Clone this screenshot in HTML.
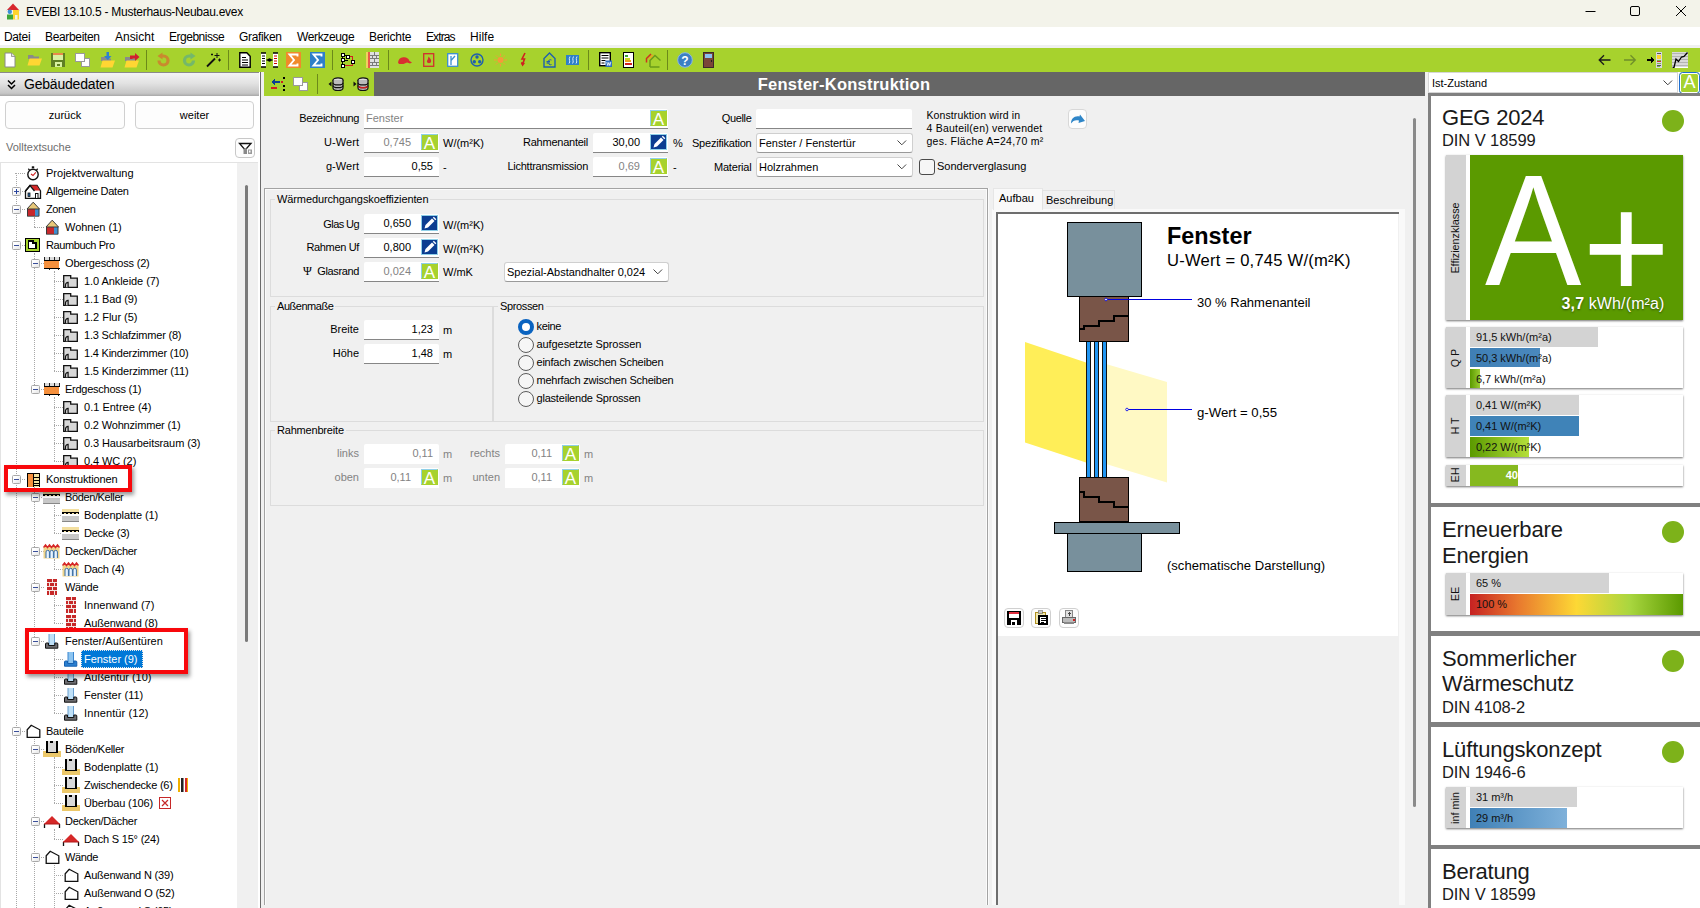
<!DOCTYPE html><html lang="de"><head><meta charset="utf-8"><title>EVEBI 13.10.5 - Musterhaus-Neubau.evex</title><style>
*{box-sizing:border-box;margin:0;padding:0}
html,body{width:1700px;height:908px;overflow:hidden;background:#f0f0f0}
body{font-family:"Liberation Sans",sans-serif;font-size:11px;color:#000;position:relative}
.abs{position:absolute}
.t{position:absolute;white-space:nowrap;line-height:14px}
#titlebar{left:0;top:0;width:1700px;height:27px;background:#f3f3ea}
#menubar{left:0;top:27px;width:1700px;height:21px;background:#fff;border-bottom:3px solid #f0f0f0}
#menubar span{position:absolute;top:3px;font-size:12px;line-height:14px;letter-spacing:.1px}
#toolbar{left:0;top:48px;width:1700px;height:24px;background:#a7d22d}
.tbi{position:absolute;top:4px;width:16px;height:16px}
.tsep{position:absolute;top:2px;width:1px;height:20px;background:#6c8a1a}
#left{left:0;top:72px;width:260px;height:836px;background:#fff}
#lefthead{left:0;top:0;width:259px;height:24px;background:linear-gradient(#f4f4f4 0%,#e2e2e2 45%,#c6c6c6 88%,#a8a8a8 100%);border-top:1px solid #8a8a8a}
.btn{position:absolute;border:1px solid #d0d0d0;border-radius:4px;background:#fdfdfd;text-align:center}
#tree{left:0px;top:90px;width:258px;height:746px;border-top:1px solid #e3e3e3;border-left:1px solid #e3e3e3;background:#fff;overflow:hidden}
.row{position:absolute;height:18px;white-space:nowrap}
.row .ic{position:absolute;top:1px}
.row .tx{position:absolute;top:2px;line-height:14px;font-size:11px}
.exp{position:absolute;width:9px;height:9px;border:1px solid #a8a8a8;background:linear-gradient(135deg,#fff 30%,#e4e4e4);border-radius:1.500px}
.exp:before{content:"";position:absolute;left:1px;top:3px;width:5px;height:1px;background:#3a4f9a}
.exp.plus:after{content:"";position:absolute;left:3px;top:1px;width:1px;height:5px;background:#1f3fa0}
.hl{position:absolute;border-top:1px dotted #a8a8a8}
.vl{position:absolute;border-left:1px dotted #a8a8a8}
.redbox{position:absolute;border:4px solid #f8080c;box-shadow:2px 3px 4px rgba(0,0,0,.4)}
.lbl{position:absolute;white-space:nowrap;text-align:right;line-height:14px}
.inp{position:absolute;background:#fff;height:20px;border-bottom:1px solid #868686;text-align:right;line-height:18px;border-radius:2px 2px 0 0}
.inp.dis{border-bottom:none;color:#838383}
.gray{color:#838383}
.abtn{position:absolute;width:17px;height:16px;background:#a7d22d;color:#fff;font-size:17px;line-height:17px;text-align:center;border:1px solid #8fd0e8;border-right-color:#a7d22d;border-bottom-color:#a7d22d}
.pbtn{position:absolute;width:17px;height:16px;background:#0b3d91;border:1px solid #8fd0e8}
.sel{position:absolute;background:#fff;border:1px solid #cfcfcf;border-bottom-color:#9a9a9a;border-radius:3px;height:20px;line-height:18px;padding-left:2px;white-space:nowrap}
.chev{position:absolute;right:5px;top:6px}
.grp{position:absolute;border:1px solid #dcdcdc;}
.grp>.gt{position:absolute;top:-8px;left:4px;background:#f0f0f0;padding:0 2px;line-height:14px;white-space:nowrap}
.radio{position:absolute;width:16px;height:16px;border-radius:50%;border:1px solid #5c5c5c;background:#f6f6f6}
.radio.on{border:4.5px solid #0a63c0;background:#fff}
.ar{font-family:"Liberation Sans",sans-serif}
.pbox{position:absolute;left:1446px;width:237px;background:#fff;box-shadow:0 1px 2px rgba(0,0,0,.55)}
.pcol{position:absolute;left:0;top:0;bottom:0;width:20px;background:#d3d3d3}
.pcol span{position:absolute;left:46%;top:50%;transform:translate(-50%,-50%) rotate(-90deg);white-space:nowrap;font-size:10.800px;line-height:12px;color:#111}
.bar{position:absolute;left:24px;font-size:11px;line-height:20px;padding-left:5.9px;white-space:nowrap;color:#111}
.dot{position:absolute;left:1662px;width:22px;height:22px;border-radius:50%;background:#7db21a}
.ph{position:absolute;left:1442px;white-space:nowrap;color:#1a1a1a}
.sepbar{position:absolute;left:1428px;width:272px;height:4.5px;background:#808080}
</style></head><body>
<div id="titlebar" class="abs">
<div class="abs" style="left:6px;top:3px"><svg width="16" height="18" viewBox="0 0 16 18"><path d="M0.5 7.500L7 0.500l6.500 7z" fill="#d8262c"/><rect x="1" y="7" width="6" height="5" fill="#f3f3ea"/><circle cx="3.800" cy="8.800" r="2.200" fill="#3b8fd6"/><rect x="1" y="11.500" width="6" height="5" fill="#3da63a"/><path d="M7 7h6v9.500H7z" fill="#ffd42e"/><rect x="9" y="12" width="2.500" height="4.500" fill="#f3f3ea"/></svg></div>
<div class="t" style="left:26px;top:5px;font-size:12px;letter-spacing:-0.258px">EVEBI 13.10.5 - Musterhaus-Neubau.evex</div>
<svg class="abs" style="left:1580px;top:0" width="120" height="27" viewBox="0 0 120 27"><path d="M5.5 11.5h10" stroke="#000" stroke-width="1"/><rect x="50.500" y="6.500" width="9" height="9" rx="1.500" fill="none" stroke="#000" stroke-width="1"/><path d="M96 6l10 10M106 6l-10 10" stroke="#000" stroke-width="1"/></svg>
</div>
<div id="menubar" class="abs">
<span style="left:4px;letter-spacing:-0.363px">Datei</span>
<span style="left:45px;letter-spacing:-0.334px">Bearbeiten</span>
<span style="left:115px;letter-spacing:-0.022px">Ansicht</span>
<span style="left:169px;letter-spacing:-0.484px">Ergebnisse</span>
<span style="left:239px;letter-spacing:-0.331px">Grafiken</span>
<span style="left:297px;letter-spacing:-0.364px">Werkzeuge</span>
<span style="left:369px;letter-spacing:-0.228px">Berichte</span>
<span style="left:426px;letter-spacing:-0.885px">Extras</span>
<span style="left:470px;letter-spacing:0.039px">Hilfe</span>
</div>
<div id="toolbar" class="abs">
<svg class="abs" style="left:4px;top:4px" width="12" height="16" viewBox="0 0 12 16"><path d="M1 1h6.500l3.500 3.500V15H1z" fill="#fff" stroke="#8a8a8a" stroke-width="1"/><path d="M7.500 1v3.500H11" fill="#e0e0e0" stroke="#8a8a8a" stroke-width=".8"/></svg><svg class="abs" style="left:27px;top:4px" width="16" height="16" viewBox="0 0 16 16"><path d="M1 3h5l1 1.500h5V7H1z" fill="#8a8a8a"/><path d="M2.500 6.500H15L12.500 13.500H0.500z" fill="#ffd633"/></svg><svg class="abs" style="left:51px;top:4px" width="14" height="16" viewBox="0 0 14 16" shape-rendering="crispEdges"><rect x="0" y="1" width="14" height="14" fill="#5f7f24"/><rect x="2" y="1" width="10" height="2" fill="#e8884a"/><rect x="2" y="3" width="10" height="5" fill="#d8f0a0"/><rect x="4" y="10" width="7" height="5" fill="#d8f0a0"/><rect x="6" y="11.500" width="2.500" height="2.500" fill="#5f7f24"/></svg><svg class="abs" style="left:75px;top:4px" width="16" height="16" viewBox="0 0 16 16" shape-rendering="crispEdges"><rect x="6.500" y="6.500" width="8" height="8" fill="#fff" stroke="#9a9a9a"/><rect x="0.500" y="1.500" width="9" height="8" fill="#fff" stroke="#9a9a9a"/></svg><svg class="abs" style="left:100px;top:4px" width="16" height="16" viewBox="0 0 16 16"><path d="M1 5h5l1 1.500h4V9H1z" fill="#8a8a8a"/><path d="M2.500 8.500H15L12.500 15.500H0.500z" fill="#ffd633"/><path d="M6.500 0h2.500v4h2.500L7.800 8 4 4h2.500z" fill="#2f7fd0"/></svg><svg class="abs" style="left:124px;top:4px" width="16" height="16" viewBox="0 0 16 16"><path d="M1 5h5l1 1.500h4V9H1z" fill="#8a8a8a"/><path d="M2.500 8.500H15L12.500 15.500H0.500z" fill="#ffd633"/><path d="M6 7V3.500h5V1l4.500 4L11 9V6.500H8.500V7z" fill="#d02030"/></svg><div class="tsep" style="left:146px"></div><svg class="abs" style="left:156px;top:4px" width="16" height="16" viewBox="0 0 16 16"><path d="M3 8.500a4.500 4.500 0 1 0 4.500-4.500H5" fill="none" stroke="#c98a2e" stroke-width="3.200"/><path d="M6.500 0.500L1.500 4l5 3.500z" fill="#c98a2e"/></svg><svg class="abs" style="left:181px;top:4px" width="16" height="16" viewBox="0 0 16 16"><path d="M12.500 8.500a4.500 4.500 0 1 1-4.500-4.500h2.500" fill="none" stroke="#74b86a" stroke-width="3.200"/><path d="M9.500 0.500l5 3.500-5 3.500z" fill="#74b86a"/></svg><svg class="abs" style="left:206px;top:4px" width="16" height="16" viewBox="0 0 16 16"><path d="M1 14.500L9 6.500" stroke="#111" stroke-width="1.800"/><path d="M11 1v5M8.500 3.500h5M13.500 6.500v3M12 8h3M6 1.500v2M5 2.500h2" stroke="#111" stroke-width="1"/></svg><div class="tsep" style="left:228px"></div><svg class="abs" style="left:239px;top:4px" width="12" height="16" viewBox="0 0 12 16"><path d="M0.800 0.800h7l3.400 3.400V15.200H0.800z" fill="#fff" stroke="#000" stroke-width="1.400"/><path d="M3 5.500h4M3 8h6M3 10.500h6M3 13h6" stroke="#000" stroke-width="1"/></svg><svg class="abs" style="left:261px;top:4px" width="17" height="16" viewBox="0 0 17 16"><rect x="0" y="1" width="5" height="14" fill="#fff"/><rect x="12" y="1" width="5" height="14" fill="#fff"/><path d="M0 1h5M0 15h5M12 1h5M12 15h5" stroke="#000" stroke-width="1.500"/><path d="M1 4h3M1 6.500h3M1 9h3M1 11.500h3" stroke="#000" stroke-width="1"/><path d="M13 4h3M13 6.500h3M13 9h3M13 11.500h3" stroke="#c00" stroke-width="1"/><path d="M5.500 8h6" stroke="#000" stroke-width="1.500"/><circle cx="8.500" cy="8" r="1.700" fill="#000"/></svg><svg class="abs" style="left:286px;top:4px" width="15" height="16" viewBox="0 0 15 16"><rect x="0" y="0" width="15" height="16" fill="#f08a2a"/><path d="M11.500 4.500V2.500H3.500l4.500 5.500-4.500 5.500h8V11.500" fill="none" stroke="#fff" stroke-width="1.900"/></svg><svg class="abs" style="left:310px;top:4px" width="15" height="16" viewBox="0 0 15 16"><rect x="0" y="0" width="15" height="16" fill="#2f7fc8"/><path d="M11.500 4.500V2.500H3.500l4.500 5.500-4.500 5.500h8V11.500" fill="none" stroke="#fff" stroke-width="1.900"/></svg><div class="tsep" style="left:332px"></div><svg class="abs" style="left:340px;top:4px" width="17" height="16" viewBox="0 0 17 16" shape-rendering="crispEdges"><path d="M2.500 3v10M2.500 3H8M2.500 8h5v0M2.500 13H6" stroke="#000" stroke-width="1" fill="none"/><path d="M8 4.500h4v5.500M3 13h9.500v-2" stroke="#d02020" stroke-width="1" fill="none"/><rect x="1" y="1" width="3" height="3" fill="#fff" stroke="#000"/><rect x="1" y="6.500" width="3" height="3" fill="#fff" stroke="#000"/><rect x="1" y="12" width="3" height="3" fill="#fff" stroke="#000"/><rect x="6.500" y="3" width="3" height="3" fill="#fff" stroke="#000"/><rect x="11.500" y="8.500" width="3" height="3" fill="#fff" stroke="#000"/></svg><svg class="abs" style="left:366px;top:4px" width="13" height="16" viewBox="0 0 13 16" shape-rendering="crispEdges"><rect x="0" y="0" width="2" height="16" fill="#f0d060"/><rect x="2" y="0" width="2" height="16" fill="#e85a4a"/><rect x="4" y="0" width="9" height="16" fill="#e0e0e0"/><path d="M4 3h9M4 6.500h9M4 10h9M4 13.500h9M8.500 0v3M6.500 3v3.500M10.500 3v3.500M8.500 6.500v3.500M6.500 10v3.500M10.500 10v3.500" stroke="#7a7a7a" stroke-width="1"/></svg><div class="tsep" style="left:388px"></div><svg class="abs" style="left:397px;top:4px" width="16" height="16" viewBox="0 0 16 16"><path d="M1 10.500a6 6 0 0 1 11.500-1.500l2.500 1.500-2 1-3-1-3.500 1.500H2z" fill="#d83030"/></svg><svg class="abs" style="left:423px;top:4px" width="12" height="16" viewBox="0 0 12 16"><rect x="0.700" y="1.700" width="10" height="12.600" fill="none" stroke="#d03030" stroke-width="1.300"/><path d="M5.500 4.500c2 2 3 3.500 2.500 5.500-.5 1.500-3.500 1.500-4 0-.3-1.500 1-2 1.500-5.500z" fill="#d03030"/></svg><svg class="abs" style="left:447px;top:4px" width="12" height="16" viewBox="0 0 12 16"><rect x="0.700" y="1.700" width="10" height="12.600" fill="#fff" stroke="#3b8fd0" stroke-width="1.300"/><path d="M4 13V4M4 8.500l4-4.500" stroke="#3b8fd0" stroke-width="1.300" fill="none"/></svg><svg class="abs" style="left:470px;top:4px" width="14" height="16" viewBox="0 0 14 16"><circle cx="7" cy="8" r="6" fill="none" stroke="#1f5fae" stroke-width="1.400"/><circle cx="7" cy="5" r="1.700" fill="#1f5fae"/><circle cx="4.300" cy="9.800" r="1.700" fill="#1f5fae"/><circle cx="9.700" cy="9.800" r="1.700" fill="#1f5fae"/></svg><svg class="abs" style="left:494px;top:4px" width="13" height="16" viewBox="0 0 13 16"><circle cx="6.500" cy="8" r="3" fill="#f59a3a"/><path d="M6.500 1.500v2.500M6.500 12v2.500M0 8h2.500M10.500 8h2.500M2 3.500l1.700 1.700M9.300 10.800l1.700 1.700M2 12.500l1.700-1.700M9.300 5.200l1.700-1.700" stroke="#f59a3a" stroke-width="1"/></svg><svg class="abs" style="left:520px;top:4px" width="8" height="16" viewBox="0 0 8 16"><path d="M5 1L2 7h2.500L2.500 12.500 1.500 11M4 8.500" fill="none" stroke="#d02020" stroke-width="1.600"/><path d="M1 10l1.500 4.500 2.500-3.500z" fill="#d02020"/></svg><svg class="abs" style="left:543px;top:4px" width="13" height="16" viewBox="0 0 13 16"><path d="M1 15V6.500L6.500 1 12 6.500V15z" fill="none" stroke="#1f5fae" stroke-width="1.400"/><path d="M8.500 8a2.500 2.500 0 1 0 0 4.500M3.500 9.500h3.500M3.500 11h3.500" fill="none" stroke="#1f5fae" stroke-width="1"/></svg><svg class="abs" style="left:566px;top:4px" width="13" height="16" viewBox="0 0 13 16"><rect x="0" y="3" width="13" height="10" fill="#2f7fc8"/><path d="M3 11.500c2-2-1-4 1-7M6.500 11.500c2-2-1-4 1-7M10 11.500c2-2-1-4 1-7" stroke="#d8ecff" stroke-width="1" fill="none"/></svg><div class="tsep" style="left:588px"></div><svg class="abs" style="left:599px;top:4px" width="13" height="16" viewBox="0 0 13 16"><rect x="0.700" y="0.700" width="10.600" height="13" fill="#fff" stroke="#000" stroke-width="1.400"/><path d="M2.500 3.500h7M2.500 6h7M2.500 8.500h4M2.500 11h3" stroke="#000" stroke-width="1.200"/><rect x="6.500" y="8.500" width="6.500" height="6.500" fill="#2f6fc0"/><path d="M7.800 10l1 3.500 1-3 1 3 1-3.500" stroke="#fff" stroke-width=".8" fill="none"/></svg><svg class="abs" style="left:623px;top:4px" width="11" height="16" viewBox="0 0 11 16" shape-rendering="crispEdges"><rect x="0.700" y="0.700" width="9.600" height="14.600" fill="#fff" stroke="#000" stroke-width="1.400"/><rect x="2" y="3" width="3" height="2" fill="#3da63a"/><rect x="2" y="5.500" width="4.500" height="2" fill="#c8d820"/><rect x="2" y="8" width="5.500" height="2" fill="#f0a020"/><rect x="2" y="10.500" width="6.500" height="2.500" fill="#d02020"/></svg><svg class="abs" style="left:645px;top:4px" width="16" height="16" viewBox="0 0 16 16"><path d="M6 2L1.500 6.500v4" fill="none" stroke="#d03020" stroke-width="1.500"/><path d="M4 7l4-4" stroke="#f0a020" stroke-width="1.500"/><path d="M5 15V8.500L10 3.500l5.500 5" fill="none" stroke="#6a9a1a" stroke-width="1.500"/><path d="M5 15h9.500" stroke="#6a9a1a" stroke-width="1.500"/></svg><div class="tsep" style="left:667px"></div><svg class="abs" style="left:677px;top:4px" width="16" height="16" viewBox="0 0 16 16"><circle cx="8" cy="8" r="7.300" fill="#3b7fc4" stroke="#8ab8e8" stroke-width="1"/><text x="8" y="12.500" font-family="Liberation Sans,sans-serif" font-size="12" font-weight="700" fill="#fff" text-anchor="middle">?</text></svg><svg class="abs" style="left:703px;top:4px" width="11" height="16" viewBox="0 0 11 16" shape-rendering="crispEdges"><rect x="0.500" y="0.500" width="10" height="15" fill="#7a4638" stroke="#3a2a2a"/><rect x="2" y="2" width="7" height="4" fill="#8ac0f0"/><rect x="7.500" y="8" width="1.500" height="1.500" fill="#222"/></svg><svg class="abs" style="left:1598px;top:4px" width="14" height="16" viewBox="0 0 14 16"><path d="M12.500 8H1.500M6 3.200L1.200 8 6 12.800" fill="none" stroke="#1a1a1a" stroke-width="1.300"/></svg><svg class="abs" style="left:1623px;top:4px" width="14" height="16" viewBox="0 0 14 16"><path d="M1 8h11M7.500 3.200L12.300 8 7.500 12.800" fill="none" stroke="#6f8f2a" stroke-width="1.300"/></svg><svg class="abs" style="left:1646px;top:4px" width="16" height="16" viewBox="0 0 16 16" shape-rendering="crispEdges"><path d="M1 8h5" stroke="#000" stroke-width="2"/><path d="M5 4.500L9 8 5 11.500z" fill="#000"/><rect x="10" y="0" width="6" height="16" fill="#d8d8e0"/><rect x="11" y="1" width="4" height="1" fill="#555"/><rect x="11" y="3" width="4" height="4" fill="#ffd42e"/><rect x="11" y="7.500" width="4" height="1.500" fill="#7ab648"/><rect x="11" y="9" width="4" height="1.200" fill="#d03030"/><rect x="11" y="10.500" width="4" height="1.500" fill="#7ab648"/><rect x="11" y="12.500" width="4" height="1" fill="#555"/><rect x="11" y="14" width="2.500" height="1" fill="#7ab648"/></svg><svg class="abs" style="left:1672px;top:4px" width="16" height="16" viewBox="0 0 16 16"><rect x="0" y="0" width="16" height="16" fill="#fff"/><path d="M0 1.500h16M0 4.500h16M0 7.500h16M0 10.500h16M0 13.500h16" stroke="#b4b4b4" stroke-width="1.800"/><path d="M0.500 15.500h1.500l2-8.500 2.500 2.500 3-4.500 2.500-.5L15.500 0.500" fill="none" stroke="#000" stroke-width="1.300"/></svg>
</div>
<div id="left" class="abs">
<div id="lefthead" class="abs"><svg class="abs" style="left:6px;top:6px" width="11" height="11" viewBox="0 0 11 11"><path d="M2 1.500l3.500 3.500 3.500-3.500M2 6l3.500 3.500 3.500-3.500" fill="none" stroke="#000" stroke-width="1.500"/></svg><div class="t" style="left:24px;top:3px;font-size:14px;line-height:16px;letter-spacing:-.2px">Gebäudedaten</div></div>
<div class="btn" style="left:5px;top:29px;width:120px;height:28px;line-height:26px">zurück</div>
<div class="btn" style="left:135px;top:29px;width:119px;height:28px;line-height:26px">weiter</div>
<div class="t" style="left:6px;top:68px;color:#6d6d6d">Volltextsuche</div>
<div class="btn" style="left:235px;top:66px;width:20px;height:20px;border-color:#c8c8c8"><svg class="abs" style="left:2px;top:3px" width="15" height="13" viewBox="0 0 15 13"><path d="M1.500 1.500h11.500L7.200 8z" fill="#fff" stroke="#111" stroke-width="1.300"/><rect x="5.500" y="6.500" width="3.500" height="5.500" fill="#8a8a8a"/><rect x="10" y="7.500" width="4" height="4.500" fill="#9a9a9a"/><rect x="11" y="8.500" width="1.500" height="2" fill="#fff"/></svg></div>
<div id="tree" class="abs">
<div class="abs" style="left:236px;top:0;width:21px;height:746px;background:#f0f0f0"></div>
<div class="abs" style="left:244px;top:22px;width:3px;height:457px;background:#7a7a7a;border-radius:1.5px"></div>
<div class="vl" style="left:15px;top:10px;height:767px"></div>
<div class="vl" style="left:33px;top:54px;height:10px"></div>
<div class="vl" style="left:33px;top:90px;height:136px"></div>
<div class="vl" style="left:52.5px;top:108px;height:100px"></div>
<div class="vl" style="left:52.5px;top:234px;height:64px"></div>
<div class="vl" style="left:33px;top:324px;height:154px"></div>
<div class="vl" style="left:52.5px;top:342px;height:28px"></div>
<div class="vl" style="left:52.5px;top:396px;height:10px"></div>
<div class="vl" style="left:52.5px;top:432px;height:28px"></div>
<div class="vl" style="left:52.5px;top:486px;height:64px"></div>
<div class="vl" style="left:33px;top:576px;height:201px"></div>
<div class="vl" style="left:52.5px;top:594px;height:46px"></div>
<div class="vl" style="left:52.5px;top:666px;height:10px"></div>
<div class="vl" style="left:52.5px;top:702px;height:75px"></div>
<div class="hl" style="left:14px;top:10px;width:10px"></div>
<div class="row" style="left:0;top:1px;width:235px">
<span class="ic" style="left:23px"><svg width="18" height="16" viewBox="0 0 18 16"><circle cx="9" cy="9.500" r="5.200" fill="#fff" stroke="#111" stroke-width="1.400"/><rect x="7.800" y="1.300" width="2.400" height="2" fill="#111"/><path d="M4.300 3.800l1.300 1.300M13.700 3.800l-1.300 1.300" stroke="#111" stroke-width="1.300"/><path d="M7 9l2 1.500 2.800-3.200" stroke="#d02020" stroke-width="1.100" fill="none"/></svg></span>
<span class="tx" style="left:45px;letter-spacing:0.01px">Projektverwaltung</span>
</div>
<div class="hl" style="left:14px;top:28px;width:10px"></div>
<div class="exp plus" style="left:10.5px;top:24px"></div>
<div class="row" style="left:0;top:19px;width:235px">
<span class="ic" style="left:23px"><svg width="18" height="16" viewBox="0 0 18 16"><path d="M1.5 8L6 2.5h7L16.5 8v7.5H1.5z" fill="#fff" stroke="#111" stroke-width="1.3"/><path d="M6.5 2.5h6.3L16 7.5h-5.5z" fill="#d62828"/><path d="M1.5 8L6 2.5 10.5 8" fill="none" stroke="#111" stroke-width="1.3"/><rect x="4" y="10" width="2" height="3.5" fill="#2a6fb5" stroke="#111" stroke-width=".8"/><rect x="11.5" y="10.5" width="2.5" height="5" fill="#fff" stroke="#111" stroke-width="1"/></svg></span>
<span class="tx" style="left:45px;letter-spacing:-0.264px">Allgemeine Daten</span>
</div>
<div class="hl" style="left:14px;top:46px;width:10px"></div>
<div class="exp" style="left:10.5px;top:42px"></div>
<div class="row" style="left:0;top:37px;width:235px">
<span class="ic" style="left:23px"><svg width="18" height="16" viewBox="0 0 18 16"><rect x="3.500" y="7.500" width="11.500" height="7.500" fill="#c8282c"/><rect x="11" y="7.500" width="4" height="7.500" fill="#3f8fd0"/><path d="M3 8L9.200 1.200 15.500 8z" fill="#e8c878" stroke="#3a3a3a" stroke-width="1" stroke-linejoin="round"/><path d="M3.500 8v7.300h11.500V8" fill="none" stroke="#3a3a3a" stroke-width="1"/><path d="M4 15.600h11" stroke="#888" stroke-width=".8"/></svg></span>
<span class="tx" style="left:45px;letter-spacing:-0.358px">Zonen</span>
</div>
<div class="hl" style="left:33px;top:64px;width:10px"></div>
<div class="row" style="left:0;top:55px;width:235px">
<span class="ic" style="left:42px"><svg width="18" height="16" viewBox="0 0 18 16"><rect x="3.500" y="7.500" width="11.500" height="7.500" fill="#c8282c"/><rect x="11" y="7.500" width="4" height="7.500" fill="#3f8fd0"/><path d="M3 8L9.200 1.200 15.500 8z" fill="#e8c878" stroke="#3a3a3a" stroke-width="1" stroke-linejoin="round"/><path d="M3.500 8v7.300h11.500V8" fill="none" stroke="#3a3a3a" stroke-width="1"/><path d="M4 15.600h11" stroke="#888" stroke-width=".8"/></svg></span>
<span class="tx" style="left:64px;letter-spacing:-0.057px">Wohnen (1)</span>
</div>
<div class="hl" style="left:14px;top:82px;width:10px"></div>
<div class="exp" style="left:10.5px;top:78px"></div>
<div class="row" style="left:0;top:73px;width:235px">
<span class="ic" style="left:23px"><svg width="18" height="16" viewBox="0 0 18 16" shape-rendering="crispEdges"><rect x="1" y="1" width="14" height="13" fill="#a6d42c" stroke="#000" stroke-width="1"/><rect x="15" y="2" width="1" height="13" fill="#000"/><rect x="2" y="14" width="14" height="1.300" fill="#000"/><path d="M4.500 4h4.500v2h3v5.500H4.500z" fill="#fff" stroke="#000" stroke-width="1.300"/></svg></span>
<span class="tx" style="left:45px;letter-spacing:-0.397px">Raumbuch Pro</span>
</div>
<div class="hl" style="left:33px;top:100px;width:10px"></div>
<div class="exp" style="left:30px;top:96px"></div>
<div class="row" style="left:0;top:91px;width:235px">
<span class="ic" style="left:42px"><svg width="18" height="16" viewBox="0 0 18 16" shape-rendering="crispEdges"><rect x="1" y="2" width="15" height="3" fill="#dcdcdc"/><rect x="1" y="6" width="15" height="7" fill="#f5903d"/><rect x="1" y="5" width="15.500" height="1.300" fill="#000"/><rect x="1" y="12.500" width="15.500" height="1.300" fill="#000"/><rect x="1" y="2" width="1" height="3" fill="#222"/><rect x="6" y="2" width="1" height="3" fill="#222"/><rect x="11" y="2" width="1" height="3" fill="#222"/><rect x="15.500" y="2" width="1" height="3" fill="#222"/><rect x="6" y="13.500" width="1" height="1.500" fill="#222"/><rect x="15" y="13.500" width="1" height="1.500" fill="#222"/></svg></span>
<span class="tx" style="left:64px;letter-spacing:-0.177px">Obergeschoss (2)</span>
</div>
<div class="hl" style="left:52.5px;top:118px;width:9.5px"></div>
<div class="row" style="left:0;top:109px;width:235px">
<span class="ic" style="left:61px"><svg width="17" height="16" viewBox="0 0 17 16"><path d="M1.700 2.700h7v2.500h6.600v9.100H1.700z" fill="#d8d8d8" stroke="#111" stroke-width="1.300"/><path d="M3.500 14.300v-2.300a2.600 2.600 0 0 1 2.600-2.600v4.900" fill="#d8d8d8" stroke="#111" stroke-width="1.200"/></svg></span>
<span class="tx" style="left:83px;letter-spacing:-0.065px">1.0 Ankleide (7)</span>
</div>
<div class="hl" style="left:52.5px;top:136px;width:9.5px"></div>
<div class="row" style="left:0;top:127px;width:235px">
<span class="ic" style="left:61px"><svg width="17" height="16" viewBox="0 0 17 16"><path d="M1.700 2.700h7v2.500h6.600v9.100H1.700z" fill="#d8d8d8" stroke="#111" stroke-width="1.300"/><path d="M3.500 14.300v-2.300a2.600 2.600 0 0 1 2.600-2.600v4.900" fill="#d8d8d8" stroke="#111" stroke-width="1.200"/></svg></span>
<span class="tx" style="left:83px;letter-spacing:-0.093px">1.1 Bad (9)</span>
</div>
<div class="hl" style="left:52.5px;top:154px;width:9.5px"></div>
<div class="row" style="left:0;top:145px;width:235px">
<span class="ic" style="left:61px"><svg width="17" height="16" viewBox="0 0 17 16"><path d="M1.700 2.700h7v2.500h6.600v9.100H1.700z" fill="#d8d8d8" stroke="#111" stroke-width="1.300"/><path d="M3.500 14.300v-2.300a2.600 2.600 0 0 1 2.600-2.600v4.900" fill="#d8d8d8" stroke="#111" stroke-width="1.200"/></svg></span>
<span class="tx" style="left:83px;letter-spacing:-0.033px">1.2 Flur (5)</span>
</div>
<div class="hl" style="left:52.5px;top:172px;width:9.5px"></div>
<div class="row" style="left:0;top:163px;width:235px">
<span class="ic" style="left:61px"><svg width="17" height="16" viewBox="0 0 17 16"><path d="M1.700 2.700h7v2.500h6.600v9.100H1.700z" fill="#d8d8d8" stroke="#111" stroke-width="1.300"/><path d="M3.500 14.300v-2.300a2.600 2.600 0 0 1 2.600-2.600v4.900" fill="#d8d8d8" stroke="#111" stroke-width="1.200"/></svg></span>
<span class="tx" style="left:83px;letter-spacing:-0.209px">1.3 Schlafzimmer (8)</span>
</div>
<div class="hl" style="left:52.5px;top:190px;width:9.5px"></div>
<div class="row" style="left:0;top:181px;width:235px">
<span class="ic" style="left:61px"><svg width="17" height="16" viewBox="0 0 17 16"><path d="M1.700 2.700h7v2.500h6.600v9.100H1.700z" fill="#d8d8d8" stroke="#111" stroke-width="1.300"/><path d="M3.500 14.300v-2.300a2.600 2.600 0 0 1 2.600-2.600v4.900" fill="#d8d8d8" stroke="#111" stroke-width="1.200"/></svg></span>
<span class="tx" style="left:83px;letter-spacing:-0.21px">1.4 Kinderzimmer (10)</span>
</div>
<div class="hl" style="left:52.5px;top:208px;width:9.5px"></div>
<div class="row" style="left:0;top:199px;width:235px">
<span class="ic" style="left:61px"><svg width="17" height="16" viewBox="0 0 17 16"><path d="M1.700 2.700h7v2.500h6.600v9.100H1.700z" fill="#d8d8d8" stroke="#111" stroke-width="1.300"/><path d="M3.500 14.300v-2.300a2.600 2.600 0 0 1 2.600-2.600v4.900" fill="#d8d8d8" stroke="#111" stroke-width="1.200"/></svg></span>
<span class="tx" style="left:83px;letter-spacing:-0.171px">1.5 Kinderzimmer (11)</span>
</div>
<div class="hl" style="left:33px;top:226px;width:10px"></div>
<div class="exp" style="left:30px;top:222px"></div>
<div class="row" style="left:0;top:217px;width:235px">
<span class="ic" style="left:42px"><svg width="18" height="16" viewBox="0 0 18 16" shape-rendering="crispEdges"><rect x="1" y="2" width="15" height="3" fill="#dcdcdc"/><rect x="1" y="6" width="15" height="7" fill="#f5903d"/><rect x="1" y="5" width="15.500" height="1.300" fill="#000"/><rect x="1" y="12.500" width="15.500" height="1.300" fill="#000"/><rect x="1" y="2" width="1" height="3" fill="#222"/><rect x="6" y="2" width="1" height="3" fill="#222"/><rect x="11" y="2" width="1" height="3" fill="#222"/><rect x="15.500" y="2" width="1" height="3" fill="#222"/><rect x="6" y="13.500" width="1" height="1.500" fill="#222"/><rect x="15" y="13.500" width="1" height="1.500" fill="#222"/></svg></span>
<span class="tx" style="left:64px;letter-spacing:-0.259px">Erdgeschoss (1)</span>
</div>
<div class="hl" style="left:52.5px;top:244px;width:9.5px"></div>
<div class="row" style="left:0;top:235px;width:235px">
<span class="ic" style="left:61px"><svg width="17" height="16" viewBox="0 0 17 16"><path d="M1.700 2.700h7v2.500h6.600v9.100H1.700z" fill="#d8d8d8" stroke="#111" stroke-width="1.300"/><path d="M3.500 14.300v-2.300a2.600 2.600 0 0 1 2.600-2.600v4.900" fill="#d8d8d8" stroke="#111" stroke-width="1.200"/></svg></span>
<span class="tx" style="left:83px;letter-spacing:0.01px">0.1 Entree (4)</span>
</div>
<div class="hl" style="left:52.5px;top:262px;width:9.5px"></div>
<div class="row" style="left:0;top:253px;width:235px">
<span class="ic" style="left:61px"><svg width="17" height="16" viewBox="0 0 17 16"><path d="M1.700 2.700h7v2.500h6.600v9.100H1.700z" fill="#d8d8d8" stroke="#111" stroke-width="1.300"/><path d="M3.500 14.300v-2.300a2.600 2.600 0 0 1 2.600-2.600v4.900" fill="#d8d8d8" stroke="#111" stroke-width="1.200"/></svg></span>
<span class="tx" style="left:83px;letter-spacing:-0.169px">0.2 Wohnzimmer (1)</span>
</div>
<div class="hl" style="left:52.5px;top:280px;width:9.5px"></div>
<div class="row" style="left:0;top:271px;width:235px">
<span class="ic" style="left:61px"><svg width="17" height="16" viewBox="0 0 17 16"><path d="M1.700 2.700h7v2.500h6.600v9.100H1.700z" fill="#d8d8d8" stroke="#111" stroke-width="1.300"/><path d="M3.500 14.300v-2.300a2.600 2.600 0 0 1 2.600-2.600v4.900" fill="#d8d8d8" stroke="#111" stroke-width="1.200"/></svg></span>
<span class="tx" style="left:83px;letter-spacing:-0.1px">0.3 Hausarbeitsraum (3)</span>
</div>
<div class="hl" style="left:52.5px;top:298px;width:9.5px"></div>
<div class="row" style="left:0;top:289px;width:235px">
<span class="ic" style="left:61px"><svg width="17" height="16" viewBox="0 0 17 16"><path d="M1.700 2.700h7v2.500h6.600v9.100H1.700z" fill="#d8d8d8" stroke="#111" stroke-width="1.300"/><path d="M3.500 14.300v-2.300a2.600 2.600 0 0 1 2.600-2.600v4.900" fill="#d8d8d8" stroke="#111" stroke-width="1.200"/></svg></span>
<span class="tx" style="left:83px;letter-spacing:-0.097px">0.4 WC (2)</span>
</div>
<div class="hl" style="left:14px;top:316px;width:10px"></div>
<div class="exp" style="left:10.5px;top:312px"></div>
<div class="row" style="left:0;top:307px;width:235px">
<span class="ic" style="left:23px"><svg width="18" height="16" viewBox="0 0 18 16" shape-rendering="crispEdges"><rect x="4" y="3" width="5" height="13" fill="#f5903d"/><rect x="10" y="3" width="5" height="13" fill="#f3e3a0"/><rect x="3" y="2" width="1" height="14" fill="#000"/><rect x="8.5" y="2" width="1.5" height="14" fill="#000"/><rect x="15" y="2" width="1" height="14" fill="#000"/><rect x="3" y="2" width="13" height="1" fill="#000"/><rect x="10" y="5.5" width="5" height="1" fill="#000"/><rect x="10" y="8.500" width="5" height="1" fill="#000"/><rect x="10" y="11.500" width="5" height="1" fill="#000"/><rect x="10" y="14" width="5" height="1" fill="#000"/></svg></span>
<span class="tx" style="left:45px;letter-spacing:-0.141px">Konstruktionen</span>
</div>
<div class="hl" style="left:33px;top:334px;width:10px"></div>
<div class="exp" style="left:30px;top:330px"></div>
<div class="row" style="left:0;top:325px;width:235px">
<span class="ic" style="left:42px"><svg width="17" height="16" viewBox="0 0 17 16" shape-rendering="crispEdges"><rect x="0" y="2" width="17" height="3" fill="#f3dfa0"/><rect x="0" y="5" width="17" height="2" fill="#000"/><path d="M2 6h2M6 6h2M10 6h2M14 6h2" stroke="#f3dfa0" stroke-width="1"/><rect x="0" y="7" width="17" height="2" fill="#fff"/><rect x="0" y="9" width="17" height="5" fill="#c8c8c8"/><rect x="0" y="13.5" width="17" height="1" fill="#888"/></svg></span>
<span class="tx" style="left:64px;letter-spacing:-0.382px">Böden/Keller</span>
</div>
<div class="hl" style="left:52.5px;top:352px;width:9.5px"></div>
<div class="row" style="left:0;top:343px;width:235px">
<span class="ic" style="left:61px"><svg width="17" height="16" viewBox="0 0 17 16" shape-rendering="crispEdges"><rect x="0" y="2" width="17" height="3" fill="#f3dfa0"/><rect x="0" y="5" width="17" height="2" fill="#000"/><path d="M2 6h2M6 6h2M10 6h2M14 6h2" stroke="#f3dfa0" stroke-width="1"/><rect x="0" y="7" width="17" height="2" fill="#fff"/><rect x="0" y="9" width="17" height="5" fill="#c8c8c8"/><rect x="0" y="13.5" width="17" height="1" fill="#888"/></svg></span>
<span class="tx" style="left:83px;letter-spacing:-0.068px">Bodenplatte (1)</span>
</div>
<div class="hl" style="left:52.5px;top:370px;width:9.5px"></div>
<div class="row" style="left:0;top:361px;width:235px">
<span class="ic" style="left:61px"><svg width="17" height="16" viewBox="0 0 17 16" shape-rendering="crispEdges"><rect x="0" y="2" width="17" height="3" fill="#f3dfa0"/><rect x="0" y="5" width="17" height="2" fill="#000"/><path d="M2 6h2M6 6h2M10 6h2M14 6h2" stroke="#f3dfa0" stroke-width="1"/><rect x="0" y="7" width="17" height="2" fill="#fff"/><rect x="0" y="9" width="17" height="5" fill="#c8c8c8"/><rect x="0" y="13.5" width="17" height="1" fill="#888"/></svg></span>
<span class="tx" style="left:83px;letter-spacing:-0.253px">Decke (3)</span>
</div>
<div class="hl" style="left:33px;top:388px;width:10px"></div>
<div class="exp" style="left:30px;top:384px"></div>
<div class="row" style="left:0;top:379px;width:235px">
<span class="ic" style="left:42px"><svg width="17" height="16" viewBox="0 0 17 16"><rect x="0.5" y="4" width="16" height="11.5" fill="#f0d48a"/><path d="M0.5 4.5l2-2.5 2 2.5 2-2.5 2 2.5 2-2.5 2 2.5 2-2.5 2 2.5" fill="none" stroke="#d62828" stroke-width="1.5"/><path d="M3 15V9a1.7 1.7 0 0 1 3.4 0v6M7 15V9a1.7 1.7 0 0 1 3.4 0v6M11 15V9a1.7 1.7 0 0 1 3.4 0v6" fill="#e8f4ff" stroke="#3b6ea5" stroke-width="1"/></svg></span>
<span class="tx" style="left:64px;letter-spacing:-0.301px">Decken/Dächer</span>
</div>
<div class="hl" style="left:52.5px;top:406px;width:9.5px"></div>
<div class="row" style="left:0;top:397px;width:235px">
<span class="ic" style="left:61px"><svg width="17" height="16" viewBox="0 0 17 16"><rect x="0.5" y="4" width="16" height="11.5" fill="#f0d48a"/><path d="M0.5 4.5l2-2.5 2 2.5 2-2.5 2 2.5 2-2.5 2 2.5 2-2.5 2 2.5" fill="none" stroke="#d62828" stroke-width="1.5"/><path d="M3 15V9a1.7 1.7 0 0 1 3.4 0v6M7 15V9a1.7 1.7 0 0 1 3.4 0v6M11 15V9a1.7 1.7 0 0 1 3.4 0v6" fill="#e8f4ff" stroke="#3b6ea5" stroke-width="1"/></svg></span>
<span class="tx" style="left:83px;letter-spacing:-0.235px">Dach (4)</span>
</div>
<div class="hl" style="left:33px;top:424px;width:10px"></div>
<div class="exp" style="left:30px;top:420px"></div>
<div class="row" style="left:0;top:415px;width:235px">
<span class="ic" style="left:42px"><svg width="16" height="16" viewBox="0 0 16 16" shape-rendering="crispEdges"><rect x="4" y="0" width="10" height="16" fill="#c62828"/><path d="M4 3.500h10M4 7.500h10M4 11.500h10" stroke="#f3e4e0" stroke-width="1"/><path d="M9 0v3.500M6.500 3.500v4M11.500 3.500v4M9 7.500v4M6.500 11.500v4.500M11.500 11.500v4.500" stroke="#f3e4e0" stroke-width="1"/></svg></span>
<span class="tx" style="left:64px;letter-spacing:-0.331px">Wände</span>
</div>
<div class="hl" style="left:52.5px;top:442px;width:9.5px"></div>
<div class="row" style="left:0;top:433px;width:235px">
<span class="ic" style="left:61px"><svg width="16" height="16" viewBox="0 0 16 16" shape-rendering="crispEdges"><rect x="4" y="0" width="10" height="16" fill="#c62828"/><path d="M4 3.500h10M4 7.500h10M4 11.500h10" stroke="#f3e4e0" stroke-width="1"/><path d="M9 0v3.500M6.500 3.500v4M11.500 3.500v4M9 7.500v4M6.500 11.500v4.500M11.500 11.500v4.500" stroke="#f3e4e0" stroke-width="1"/></svg></span>
<span class="tx" style="left:83px;letter-spacing:0.006px">Innenwand (7)</span>
</div>
<div class="hl" style="left:52.5px;top:460px;width:9.5px"></div>
<div class="row" style="left:0;top:451px;width:235px">
<span class="ic" style="left:61px"><svg width="16" height="16" viewBox="0 0 16 16" shape-rendering="crispEdges"><rect x="4" y="0" width="10" height="16" fill="#c62828"/><path d="M4 3.500h10M4 7.500h10M4 11.500h10" stroke="#f3e4e0" stroke-width="1"/><path d="M9 0v3.500M6.500 3.500v4M11.500 3.500v4M9 7.500v4M6.500 11.500v4.500M11.500 11.500v4.500" stroke="#f3e4e0" stroke-width="1"/></svg></span>
<span class="tx" style="left:83px;letter-spacing:-0.116px">Außenwand (8)</span>
</div>
<div class="hl" style="left:33px;top:478px;width:10px"></div>
<div class="exp" style="left:30px;top:474px"></div>
<div class="row" style="left:0;top:469px;width:235px">
<span class="ic" style="left:42px"><svg width="18" height="16" viewBox="0 0 18 16"><rect x="6" y="1" width="5.500" height="12" fill="#bfe0f7"/><rect x="5.500" y="1" width="1" height="11" fill="#6a9fd0"/><rect x="11" y="1" width="1" height="11" fill="#6a9fd0"/><path d="M2.500 15.200v-4.200a1 1 0 0 1 1-1h2v2.500h6.300v-2.500h2a1 1 0 0 1 1 1v4.200z" fill="#6e6e72" stroke="#111" stroke-width="1"/></svg></span>
<span class="tx" style="left:64px;letter-spacing:-0.002px">Fenster/Außentüren</span>
</div>
<div class="hl" style="left:52.5px;top:496px;width:9.5px"></div>
<div class="row" style="left:0;top:487px;width:235px">
<span class="ic" style="left:61px"><svg width="18" height="16" viewBox="0 0 18 16"><rect x="6" y="1" width="5.500" height="12" fill="#8cc4f0"/><rect x="5.500" y="1" width="1" height="11" fill="#3a86d0"/><rect x="11" y="1" width="1" height="11" fill="#3a86d0"/><path d="M2.500 15.200v-4.200a1 1 0 0 1 1-1h2v2.500h6.300v-2.500h2a1 1 0 0 1 1 1v4.200z" fill="#2a7fd0" stroke="#1560b0" stroke-width="1"/></svg></span>
<span class="abs" style="left:80px;top:0;width:62px;height:18px;background:#0078d7;border:1px dotted #e8e8e8"></span>
<span class="tx" style="left:83px;color:#fff;letter-spacing:-0.036px">Fenster (9)</span>
</div>
<div class="hl" style="left:52.5px;top:514px;width:9.5px"></div>
<div class="row" style="left:0;top:505px;width:235px">
<span class="ic" style="left:61px"><svg width="18" height="16" viewBox="0 0 18 16"><rect x="6" y="1" width="5.500" height="12" fill="#bfe0f7"/><rect x="5.500" y="1" width="1" height="11" fill="#6a9fd0"/><rect x="11" y="1" width="1" height="11" fill="#6a9fd0"/><path d="M2.500 15.200v-4.200a1 1 0 0 1 1-1h2v2.500h6.300v-2.500h2a1 1 0 0 1 1 1v4.200z" fill="#6e6e72" stroke="#111" stroke-width="1"/></svg></span>
<span class="tx" style="left:83px;letter-spacing:-0.036px">Außentür (10)</span>
</div>
<div class="hl" style="left:52.5px;top:532px;width:9.5px"></div>
<div class="row" style="left:0;top:523px;width:235px">
<span class="ic" style="left:61px"><svg width="18" height="16" viewBox="0 0 18 16"><rect x="6" y="1" width="5.500" height="12" fill="#bfe0f7"/><rect x="5.500" y="1" width="1" height="11" fill="#6a9fd0"/><rect x="11" y="1" width="1" height="11" fill="#6a9fd0"/><path d="M2.500 15.200v-4.200a1 1 0 0 1 1-1h2v2.500h6.300v-2.500h2a1 1 0 0 1 1 1v4.200z" fill="#6e6e72" stroke="#111" stroke-width="1"/></svg></span>
<span class="tx" style="left:83px;letter-spacing:0.017px">Fenster (11)</span>
</div>
<div class="hl" style="left:52.5px;top:550px;width:9.5px"></div>
<div class="row" style="left:0;top:541px;width:235px">
<span class="ic" style="left:61px"><svg width="18" height="16" viewBox="0 0 18 16"><rect x="6" y="1" width="5.500" height="12" fill="#bfe0f7"/><rect x="5.500" y="1" width="1" height="11" fill="#6a9fd0"/><rect x="11" y="1" width="1" height="11" fill="#6a9fd0"/><path d="M2.500 15.200v-4.200a1 1 0 0 1 1-1h2v2.500h6.300v-2.500h2a1 1 0 0 1 1 1v4.200z" fill="#6e6e72" stroke="#111" stroke-width="1"/></svg></span>
<span class="tx" style="left:83px;letter-spacing:0.124px">Innentür (12)</span>
</div>
<div class="hl" style="left:14px;top:568px;width:10px"></div>
<div class="exp" style="left:10.5px;top:564px"></div>
<div class="row" style="left:0;top:559px;width:235px">
<span class="ic" style="left:23px"><svg width="18" height="16" viewBox="0 0 18 16"><path d="M3.200 14.300V6.800L7.200 2.200l8.600 4.600v7.500z" fill="#fff" stroke="#111" stroke-width="1.300" stroke-linejoin="miter"/></svg></span>
<span class="tx" style="left:45px;letter-spacing:-0.281px">Bauteile</span>
</div>
<div class="hl" style="left:33px;top:586px;width:10px"></div>
<div class="exp" style="left:30px;top:582px"></div>
<div class="row" style="left:0;top:577px;width:235px">
<span class="ic" style="left:42px"><svg width="18" height="16" viewBox="0 0 18 16" shape-rendering="crispEdges"><rect x="0" y="10" width="18" height="6" fill="#ecc86a"/><rect x="4" y="0" width="10" height="11" fill="#d8d8d8"/><path d="M4 0v11.5h10V0" fill="none" stroke="#000" stroke-width="1.5"/><rect x="7" y="0" width="3" height="1.5" fill="#000"/></svg></span>
<span class="tx" style="left:64px;letter-spacing:-0.332px">Böden/Keller</span>
</div>
<div class="hl" style="left:52.5px;top:604px;width:9.5px"></div>
<div class="row" style="left:0;top:595px;width:235px">
<span class="ic" style="left:61px"><svg width="18" height="16" viewBox="0 0 18 16" shape-rendering="crispEdges"><rect x="0" y="10" width="18" height="6" fill="#ecc86a"/><rect x="4" y="0" width="10" height="11" fill="#d8d8d8"/><path d="M4 0v11.5h10V0" fill="none" stroke="#000" stroke-width="1.5"/><rect x="7" y="0" width="3" height="1.5" fill="#000"/></svg></span>
<span class="tx" style="left:83px;letter-spacing:-0.054px">Bodenplatte (1)</span>
</div>
<div class="hl" style="left:52.5px;top:622px;width:9.5px"></div>
<div class="row" style="left:0;top:613px;width:235px">
<span class="ic" style="left:61px"><svg width="18" height="16" viewBox="0 0 18 16" shape-rendering="crispEdges"><rect x="0" y="10" width="18" height="6" fill="#ecc86a"/><rect x="4" y="0" width="10" height="11" fill="#d8d8d8"/><path d="M4 0v11.5h10V0" fill="none" stroke="#000" stroke-width="1.5"/><rect x="7" y="0" width="3" height="1.5" fill="#000"/></svg></span>
<span class="tx" style="left:83px;letter-spacing:-0.213px">Zwischendecke (6)</span>
<svg class="abs" style="left:177px;top:2px" width="11" height="14" viewBox="0 0 11 14" shape-rendering="crispEdges"><rect x="0" y="0" width="2" height="14" fill="#f0b000"/><rect x="3" y="0" width="2" height="14" fill="#222"/><rect x="5" y="0" width="1" height="14" fill="#888"/><rect x="7" y="0" width="2" height="14" fill="#d62828"/><rect x="9" y="0" width="1" height="14" fill="#f0b000"/></svg>
</div>
<div class="hl" style="left:52.5px;top:640px;width:9.5px"></div>
<div class="row" style="left:0;top:631px;width:235px">
<span class="ic" style="left:61px"><svg width="18" height="16" viewBox="0 0 18 16" shape-rendering="crispEdges"><rect x="0" y="10" width="18" height="6" fill="#ecc86a"/><rect x="4" y="0" width="10" height="11" fill="#d8d8d8"/><path d="M4 0v11.5h10V0" fill="none" stroke="#000" stroke-width="1.5"/><rect x="7" y="0" width="3" height="1.5" fill="#000"/></svg></span>
<span class="tx" style="left:83px;letter-spacing:-0.141px">Überbau (106)</span>
<svg class="abs" style="left:158px;top:3px" width="12" height="12" viewBox="0 0 12 12"><rect x=".5" y=".5" width="11" height="11" fill="#fff" stroke="#c62828"/><path d="M3 3l6 6M9 3l-6 6" stroke="#c62828" stroke-width="1.2"/></svg>
</div>
<div class="hl" style="left:33px;top:658px;width:10px"></div>
<div class="exp" style="left:30px;top:654px"></div>
<div class="row" style="left:0;top:649px;width:235px">
<span class="ic" style="left:42px"><svg width="18" height="16" viewBox="0 0 18 16"><path d="M1 11L9 3l8 8z" fill="#d62828"/><path d="M1.5 11v4M16.5 11v4" stroke="#111" stroke-width="1.3"/><path d="M1 11h16" stroke="#b01818" stroke-width="1"/></svg></span>
<span class="tx" style="left:64px;letter-spacing:-0.293px">Decken/Dächer</span>
</div>
<div class="hl" style="left:52.5px;top:676px;width:9.5px"></div>
<div class="row" style="left:0;top:667px;width:235px">
<span class="ic" style="left:61px"><svg width="18" height="16" viewBox="0 0 18 16"><path d="M1 11L9 3l8 8z" fill="#d62828"/><path d="M1.5 11v4M16.5 11v4" stroke="#111" stroke-width="1.3"/><path d="M1 11h16" stroke="#b01818" stroke-width="1"/></svg></span>
<span class="tx" style="left:83px;letter-spacing:-0.199px">Dach S 15° (24)</span>
</div>
<div class="hl" style="left:33px;top:694px;width:10px"></div>
<div class="exp" style="left:30px;top:690px"></div>
<div class="row" style="left:0;top:685px;width:235px">
<span class="ic" style="left:42px"><svg width="18" height="16" viewBox="0 0 18 16"><path d="M3.200 14.300V6.800L7.200 2.200l8.600 4.600v7.500z" fill="#fff" stroke="#111" stroke-width="1.300" stroke-linejoin="miter"/></svg></span>
<span class="tx" style="left:64px;letter-spacing:-0.351px">Wände</span>
</div>
<div class="hl" style="left:52.5px;top:712px;width:9.5px"></div>
<div class="row" style="left:0;top:703px;width:235px">
<span class="ic" style="left:61px"><svg width="18" height="16" viewBox="0 0 18 16"><path d="M3.200 14.300V6.800L7.200 2.200l8.600 4.600v7.500z" fill="#fff" stroke="#111" stroke-width="1.300" stroke-linejoin="miter"/></svg></span>
<span class="tx" style="left:83px;letter-spacing:-0.183px">Außenwand N (39)</span>
</div>
<div class="hl" style="left:52.5px;top:730px;width:9.5px"></div>
<div class="row" style="left:0;top:721px;width:235px">
<span class="ic" style="left:61px"><svg width="18" height="16" viewBox="0 0 18 16"><path d="M3.200 14.300V6.800L7.200 2.200l8.600 4.600v7.500z" fill="#fff" stroke="#111" stroke-width="1.300" stroke-linejoin="miter"/></svg></span>
<span class="tx" style="left:83px;letter-spacing:-0.159px">Außenwand O (52)</span>
</div>
<div class="hl" style="left:52.5px;top:748px;width:9.5px"></div>
<div class="row" style="left:0;top:739px;width:235px">
<span class="ic" style="left:61px"><svg width="18" height="16" viewBox="0 0 18 16"><path d="M3.200 14.300V6.800L7.200 2.200l8.600 4.600v7.500z" fill="#fff" stroke="#111" stroke-width="1.300" stroke-linejoin="miter"/></svg></span>
<span class="tx" style="left:83px;letter-spacing:-0.207px">Außenwand S (65)</span>
</div>
</div>
<div class="redbox" style="left:4px;top:392.500px;width:128px;height:27.500px"></div>
<div class="redbox" style="left:25px;top:556px;width:163px;height:46px"></div>
</div>
<div class="abs" style="left:260px;top:72px;width:1px;height:836px;background:#6a6a6a"></div>
<div class="abs" style="left:261px;top:72px;width:3px;height:836px;background:#f0f0f0"></div>
<div class="abs" style="left:264px;top:72px;width:1160px;height:836px;background:#f0f0f0"></div>
<div class="abs" style="left:264px;top:72px;width:110px;height:24px;background:#a7d22d">
<svg class="abs" style="left:6px;top:4px" width="16" height="16" viewBox="0 0 16 16" shape-rendering="crispEdges"><path d="M3 6h7" stroke="#0b3d91" stroke-width="2"/><path d="M5 3L1.500 6 5 9z" fill="#0b3d91"/><rect x="10.500" y="5" width="2" height="2" fill="#d02020"/><rect x="1" y="11" width="6" height="2" fill="#d02020"/><rect x="13" y="1" width="2" height="2" fill="#000"/><rect x="13" y="9" width="2" height="2" fill="#000"/><rect x="13" y="13" width="2" height="2" fill="#000"/></svg>
<svg class="abs" style="left:29px;top:4px" width="16" height="16" viewBox="0 0 16 16" shape-rendering="crispEdges"><rect x="6.500" y="6.500" width="8" height="8" fill="#fff" stroke="#9a9a9a"/><rect x="0.500" y="1.500" width="9" height="8" fill="#fff" stroke="#9a9a9a"/></svg>
<div class="tsep" style="left:53px"></div>
<svg class="abs" style="left:64px;top:4px" width="16" height="16" viewBox="0 0 16 16"><path d="M3.500 5.500L0.500 8l3 2.500z" fill="#111"/><ellipse cx="10" cy="4" rx="5" ry="2.200" fill="#ddd" stroke="#111" stroke-width="1.200"/><path d="M5 4v8c0 1.500 2.200 2.500 5 2.500s5-1 5-2.500V4" fill="#bbb" stroke="#111" stroke-width="1.200"/><path d="M5 6.700c0 1.300 2.200 2.200 5 2.200s5-.9 5-2.200M5 9.400c0 1.300 2.200 2.200 5 2.200s5-.9 5-2.200" fill="none" stroke="#111" stroke-width="1.200"/></svg>
<svg class="abs" style="left:89px;top:4px" width="16" height="16" viewBox="0 0 16 16"><path d="M0.500 5.500L3.500 8l-3 2.500z" fill="#111"/><ellipse cx="10" cy="4" rx="5" ry="2.200" fill="#ddd" stroke="#111" stroke-width="1.200"/><path d="M5 4v8c0 1.500 2.200 2.500 5 2.500s5-1 5-2.500V4" fill="#bbb" stroke="#111" stroke-width="1.200"/><path d="M5 6.700c0 1.300 2.200 2.200 5 2.200s5-.9 5-2.200M5 9.400c0 1.300 2.200 2.200 5 2.200s5-.9 5-2.200" fill="none" stroke="#111" stroke-width="1.200"/><path d="M5.500 10.500c1 1 2.500 1.300 4.500 1.300s3.500-.3 4.500-1.300" stroke="#d02020" stroke-width="1.500" fill="none"/></svg>
</div>
<div class="abs" style="left:374px;top:72px;width:1051px;height:24px;background:#666"></div>
<div class="t" style="left:264px;width:1160px;text-align:center;top:74px;font-size:16.500px;line-height:20px;font-weight:700;color:#fff;letter-spacing:0.237px">Fenster-Konstruktion</div>
<div class="abs" style="left:1413px;top:118px;width:3px;height:689px;background:#8a8a8a;border-radius:1.5px"></div>
<div class="lbl " style="right:1341px;top:111px;letter-spacing:-0.346px">Bezeichnung</div>
<div class="inp gray" style="left:364px;top:109px;width:304px;text-align:left;padding:0 28px 0 2px">Fenster</div>
<div class="abtn" style="left:650px;top:110px">A</div>
<div class="lbl " style="right:1341px;top:135px;letter-spacing:0.045px">U-Wert</div>
<div class="inp gray" style="left:364px;top:133px;width:75px;text-align:right;padding:0 28px 0 2px">0,745</div>
<div class="abtn" style="left:421px;top:134px">A</div>
<div class="t " style="left:443px;top:136px;">W/(m²K)</div>
<div class="lbl " style="right:1341px;top:159px;letter-spacing:0.05px">g-Wert</div>
<div class="inp" style="left:364px;top:157px;width:75px;text-align:right;padding:0 6px 0 2px">0,55</div>
<div class="t " style="left:443px;top:160px;">-</div>
<div class="lbl " style="right:1112px;top:135px;letter-spacing:-0.24px">Rahmenanteil</div>
<div class="inp" style="left:593px;top:133px;width:75px;text-align:right;padding:0 28px 0 2px">30,00</div>
<div class="pbtn" style="left:650px;top:134px"><svg width="15" height="14" viewBox="0 0 15 14" style="position:absolute;left:0;top:0"><path d="M2.500 12.500l1-3.500 6.500-6.500 2.500 2.500-6.500 6.500z" fill="#fff"/><path d="M10.800 1.700l1-1 2.500 2.500-1 1z" fill="#fff"/></svg></div>
<div class="t " style="left:673px;top:136px;">%</div>
<div class="lbl " style="right:1112px;top:159px;letter-spacing:-0.263px">Lichttransmission</div>
<div class="inp gray" style="left:593px;top:157px;width:75px;text-align:right;padding:0 28px 0 2px">0,69</div>
<div class="abtn" style="left:650px;top:158px">A</div>
<div class="t " style="left:673px;top:160px;">-</div>
<div class="lbl " style="right:948.5px;top:111px;letter-spacing:-0.333px">Quelle</div>
<div class="inp" style="left:756px;top:109px;width:156px;text-align:right;padding:0 6px 0 2px"></div>
<div class="lbl " style="right:948.5px;top:136px;letter-spacing:-0.221px">Spezifikation</div>
<div class="sel" style="left:756px;top:133px;width:157px">Fenster / Fenstertür<svg class="chev" width="10" height="6" viewBox="0 0 10 6"><path d="M0.500 0.500l4.300 4.300 4.300-4.300" fill="none" stroke="#444" stroke-width="1"/></svg></div>
<div class="lbl " style="right:948.5px;top:160px;letter-spacing:-0.203px">Material</div>
<div class="sel" style="left:756px;top:157px;width:157px">Holzrahmen<svg class="chev" width="10" height="6" viewBox="0 0 10 6"><path d="M0.500 0.500l4.300 4.300 4.300-4.300" fill="none" stroke="#444" stroke-width="1"/></svg></div>
<div class="t " style="left:926.5px;top:108px;letter-spacing:0.104px;font-size:10.500px">Konstruktion wird in</div>
<div class="t " style="left:926.5px;top:121px;letter-spacing:0.222px;font-size:10.500px">4 Bauteil(en) verwendet</div>
<div class="t " style="left:926.5px;top:134px;letter-spacing:0.264px;font-size:10.500px">ges. Fläche A=24,70 m²</div>
<div class="btn" style="left:1068px;top:109px;width:19px;height:20px;border-color:#d8d8d8"><svg class="abs" style="left:1px;top:4px" width="16" height="11" viewBox="0 0 16 11"><path d="M1 9.500C1 4.500 4.500 1.500 9.500 2.500L10 0.500l5 6.500-6.500 2 .5-2.500C5.500 5.500 3 6.500 1 9.500z" fill="#2f86c8"/></svg></div>
<div class="abs" style="left:919px;top:159px;width:16px;height:16px;border:1px solid #4a4a4a;border-radius:3px;background:#f6f6f6"></div>
<div class="t " style="left:937px;top:159px;">Sonderverglasung</div>
<div class="abs" style="left:264px;top:188px;width:726px;height:717px;overflow:hidden"><div class="abs" style="left:0;top:0;width:724px;height:760px;border:1px solid #a3a3a3;box-shadow:inset 0 0 0 1px #fbfbfb,1px 0 0 #fbfbfb;background:#f0f0f0"></div></div>
<div class="grp" style="left:270px;top:199px;width:714px;height:98px"><span class="gt" style="letter-spacing:-0.111px">Wärmedurchgangskoeffizienten</span></div>
<div class="lbl " style="right:1341px;top:217px;letter-spacing:-0.576px">Glas Ug</div>
<div class="inp" style="left:364px;top:214px;width:75px;text-align:right;padding:0 28px 0 2px">0,650</div>
<div class="pbtn" style="left:421px;top:215px"><svg width="15" height="14" viewBox="0 0 15 14" style="position:absolute;left:0;top:0"><path d="M2.500 12.500l1-3.500 6.500-6.500 2.500 2.500-6.500 6.500z" fill="#fff"/><path d="M10.800 1.700l1-1 2.500 2.500-1 1z" fill="#fff"/></svg></div>
<div class="t " style="left:443px;top:218px;">W/(m²K)</div>
<div class="lbl " style="right:1341px;top:240px;letter-spacing:-0.348px">Rahmen Uf</div>
<div class="inp" style="left:364px;top:238px;width:75px;text-align:right;padding:0 28px 0 2px">0,800</div>
<div class="pbtn" style="left:421px;top:239px"><svg width="15" height="14" viewBox="0 0 15 14" style="position:absolute;left:0;top:0"><path d="M2.500 12.500l1-3.500 6.500-6.500 2.500 2.500-6.500 6.500z" fill="#fff"/><path d="M10.800 1.700l1-1 2.500 2.500-1 1z" fill="#fff"/></svg></div>
<div class="t " style="left:443px;top:242px;">W/(m²K)</div>
<div class="lbl " style="right:1341px;top:264px;letter-spacing:-0.367px">Glasrand</div>
<div class="inp gray" style="left:364px;top:262px;width:75px;text-align:right;padding:0 28px 0 2px">0,024</div>
<div class="abtn" style="left:421px;top:263px">A</div>
<div class="t " style="left:443px;top:265px;">W/mK</div>
<div class="t" style="left:303px;top:264px;font-family:'Liberation Serif',serif;font-size:12px">Ψ</div>
<div class="sel" style="left:504px;top:262px;width:165px">Spezial-Abstandhalter 0,024<svg class="chev" width="10" height="6" viewBox="0 0 10 6"><path d="M0.500 0.500l4.300 4.300 4.300-4.300" fill="none" stroke="#444" stroke-width="1"/></svg></div>
<div class="grp" style="left:270px;top:305.5px;width:223px;height:116.5px"><span class="gt" style="letter-spacing:-0.459px">Außenmaße</span></div>
<div class="grp" style="left:493px;top:305.5px;width:491px;height:116.5px;border-right-color:#dcdcdc"><span class="gt" style="letter-spacing:-0.371px">Sprossen</span></div>
<div class="lbl " style="right:1341px;top:322px">Breite</div>
<div class="inp" style="left:364px;top:320px;width:75px;text-align:right;padding:0 6px 0 2px">1,23</div>
<div class="t " style="left:443px;top:323px;">m</div>
<div class="lbl " style="right:1341px;top:346px">Höhe</div>
<div class="inp" style="left:364px;top:344px;width:75px;text-align:right;padding:0 6px 0 2px">1,48</div>
<div class="t " style="left:443px;top:347px;">m</div>
<div class="radio on" style="left:517.500px;top:319px"></div>
<div class="t " style="left:536.5px;top:319px;letter-spacing:-0.339px;">keine</div>
<div class="radio" style="left:517.500px;top:337px"></div>
<div class="t " style="left:536.5px;top:337px;letter-spacing:-0.08px;">aufgesetzte Sprossen</div>
<div class="radio" style="left:517.500px;top:355px"></div>
<div class="t " style="left:536.5px;top:355px;letter-spacing:-0.236px;">einfach zwischen Scheiben</div>
<div class="radio" style="left:517.500px;top:373px"></div>
<div class="t " style="left:536.5px;top:373px;letter-spacing:-0.238px;">mehrfach zwischen Scheiben</div>
<div class="radio" style="left:517.500px;top:391px"></div>
<div class="t " style="left:536.5px;top:391px;letter-spacing:-0.202px;">glasteilende Sprossen</div>
<div class="grp" style="left:270px;top:429.5px;width:714px;height:76px"><span class="gt" style="letter-spacing:-0.191px">Rahmenbreite</span></div>
<div class="lbl gray" style="right:1341px;top:446px">links</div>
<div class="inp dis" style="left:364px;top:444px;width:75px;text-align:right;padding:0 6px 0 2px">0,11</div>
<div class="t gray" style="left:443px;top:447px;">m</div>
<div class="lbl gray" style="right:1341px;top:470px">oben</div>
<div class="inp dis" style="left:364px;top:468px;width:75px;text-align:right;padding:0 28px 0 2px">0,11</div>
<div class="abtn" style="left:421px;top:469px">A</div>
<div class="t gray" style="left:443px;top:471px;">m</div>
<div class="lbl gray" style="right:1200px;top:446px">rechts</div>
<div class="inp dis" style="left:505px;top:444px;width:75px;text-align:right;padding:0 28px 0 2px">0,11</div>
<div class="abtn" style="left:562px;top:445px">A</div>
<div class="t gray" style="left:584px;top:447px;">m</div>
<div class="lbl gray" style="right:1200px;top:470px">unten</div>
<div class="inp dis" style="left:505px;top:468px;width:75px;text-align:right;padding:0 28px 0 2px">0,11</div>
<div class="abtn" style="left:562px;top:469px">A</div>
<div class="t gray" style="left:584px;top:471px;">m</div>
<div class="abs" style="left:992px;top:209px;width:413px;height:696px;background:#f9f9f9"></div>
<div class="abs" style="left:993px;top:188px;width:50px;height:22px;background:#f9f9f9;border:1px solid #e6e6e6;border-bottom:none"></div>
<div class="abs" style="left:1042px;top:190px;width:73px;height:19px;background:#f0f0f0;border:1px solid #e2e2e2;border-bottom:none"></div>
<div class="t " style="left:999px;top:191px;">Aufbau</div>
<div class="t " style="left:1046px;top:193px;">Beschreibung</div>
<div class="abs" style="left:996px;top:212px;width:403px;height:693px;border-left:2px solid #6e6e6e;border-top:2px solid #6e6e6e;background:#f0f0f0"></div>
<div class="abs" style="left:998px;top:214px;width:400px;height:422px;background:#fff"></div>
<svg class="abs" style="left:998px;top:214px" width="400" height="422" viewBox="998 214 400 422">
<polygon points="1025,342 1086,362.500 1086,462.500 1025,442.500" fill="#ffee58"/>
<polygon points="1106,364 1167,382 1167,482.500 1106,464" fill="#fff9c4"/>
<g shape-rendering="crispEdges">
<rect x="1086" y="341" width="4" height="137" fill="#2196f3"/><rect x="1085.5" y="341" width="1" height="137" fill="#111"/><rect x="1089.5" y="341" width="1" height="137" fill="#111"/>
<rect x="1094" y="341" width="4" height="137" fill="#2196f3"/><rect x="1093.5" y="341" width="1" height="137" fill="#111"/><rect x="1097.5" y="341" width="1" height="137" fill="#111"/>
<rect x="1102" y="341" width="4" height="137" fill="#2196f3"/><rect x="1101.5" y="341" width="1" height="137" fill="#111"/><rect x="1105.5" y="341" width="1" height="137" fill="#111"/>
<rect x="1067.500" y="222.500" width="74" height="74" fill="#78909c" stroke="#000"/>
<rect x="1079.500" y="296.500" width="49" height="45" fill="#795548" stroke="#000"/>
<path d="M1080 329h4v-3h15v-5h15v-5h14" fill="none" stroke="#000" stroke-width="1.500"/>
<rect x="1079.500" y="477.500" width="49" height="44" fill="#795548" stroke="#000"/>
<path d="M1080 492h4v5h15v5h15v5h14" fill="none" stroke="#000" stroke-width="1.500"/>
<rect x="1054.500" y="522.500" width="125" height="11" fill="#78909c" stroke="#000"/>
<rect x="1067.500" y="533.500" width="74" height="38" fill="#78909c" stroke="#000"/>
<path d="M1106 299.500h86M1127 409.500h65" stroke="#0000e0" stroke-width="1"/>
</g>
<circle cx="1106" cy="299.500" r="1.300" fill="#fff" stroke="#0000e0" stroke-width=".8"/><circle cx="1127" cy="409.500" r="1.300" fill="#fff" stroke="#0000e0" stroke-width=".8"/>
<text x="1167" y="243.500" font-family="Liberation Sans,sans-serif" font-size="23.400" font-weight="700" fill="#000">Fenster</text>
<text x="1167" y="266" font-family="Liberation Sans,sans-serif" font-size="16.600" letter-spacing=".22" fill="#000">U-Wert = 0,745 W/(m²K)</text>
<text x="1197" y="307" font-family="Liberation Sans,sans-serif" font-size="13" fill="#000">30 % Rahmenanteil</text>
<text x="1197" y="417" font-family="Liberation Sans,sans-serif" font-size="13.200" fill="#000">g-Wert = 0,55</text>
<text x="1167" y="570" font-family="Liberation Sans,sans-serif" font-size="13.050" fill="#000">(schematische Darstellung)</text>
</svg>
<div class="btn" style="left:1004px;top:608px;width:20px;height:20px;border-color:#d0d0d0"></div>
<div class="btn" style="left:1031px;top:608px;width:20px;height:20px;border-color:#d0d0d0"></div>
<div class="btn" style="left:1059px;top:608px;width:20px;height:20px;border-color:#d0d0d0"></div>
<svg class="abs" style="left:1007px;top:611px" width="14" height="14" viewBox="0 0 14 14" shape-rendering="crispEdges"><rect x="0" y="0" width="14" height="14" fill="#000"/><rect x="2" y="1" width="10" height="2" fill="#e03040"/><rect x="2" y="3" width="10" height="4" fill="#fff"/><rect x="4" y="9" width="6" height="5" fill="#fff"/><rect x="5" y="10.500" width="2.500" height="3.500" fill="#000"/></svg>
<svg class="abs" style="left:1034px;top:610px" width="14" height="15" viewBox="0 0 14 15" shape-rendering="crispEdges"><rect x="1" y="2" width="10" height="11" fill="#f0e8b0" stroke="#b09020"/><rect x="4" y="0.500" width="4" height="2.500" fill="#c8c8c8" stroke="#666" stroke-width=".6"/><rect x="5" y="6" width="8" height="8" fill="#fff" stroke="#000" stroke-width="1.200"/><path d="M6.500 8.500h5M6.500 10.500h5M6.500 12.500h3" stroke="#000" stroke-width="1"/></svg>
<svg class="abs" style="left:1062px;top:610px" width="14" height="15" viewBox="0 0 14 15" shape-rendering="crispEdges"><rect x="3.500" y="0.500" width="7" height="7" fill="#e0e0e0" stroke="#888"/><path d="M7 2v4M5.500 3.500h3" stroke="#444" stroke-width="1"/><rect x="0.500" y="7.500" width="13" height="5" fill="#bbb" stroke="#666"/><rect x="2" y="12" width="10" height="2" fill="#888"/><rect x="11" y="9" width="1.500" height="1.500" fill="#d02020"/></svg>
<div class="abs" style="left:1428px;top:72px;width:272px;height:836px;background:#fff"></div>
<div class="abs" style="left:1428px;top:72px;width:250px;height:21px;background:#fff;border:1px solid #d6d6d6"></div>
<div class="t" style="left:1432px;top:76px;font-size:11px">Ist-Zustand</div>
<svg class="abs" style="left:1663px;top:80px" width="10" height="6" viewBox="0 0 10 6"><path d="M0.500 0.500l4.300 4.300 4.300-4.300" fill="none" stroke="#444" stroke-width="1"/></svg>
<div class="abs" style="left:1679px;top:72px;width:21px;height:22px;background:#a7d22d;border:1.500px solid #1f6fd0;border-radius:3.500px;box-shadow:inset 0 0 0 1px #fff;color:#fff;font-size:18px;line-height:19px;text-align:center">A</div>
<div class="abs" style="left:1428px;top:93px;width:3px;height:815px;background:#808080"></div>
<div class="abs" style="left:1428px;top:93px;width:272px;height:3px;background:#808080"></div>
<div class="sepbar" style="top:502.5px"></div>
<div class="sepbar" style="top:631px"></div>
<div class="sepbar" style="top:722px"></div>
<div class="sepbar" style="top:844.5px"></div>
<div class="ph" style="top:105.4px;font-size:22px;line-height:25px;letter-spacing:-0.219px">GEG 2024</div>
<div class="ph" style="top:131.3px;font-size:16.500px;line-height:19px;letter-spacing:-0.079px">DIN V 18599</div>
<div class="dot" style="top:110px"></div>
<div class="pbox" style="top:155px;height:165px"><div class="pcol"><span>Effizienzklasse</span></div><div class="abs" style="left:24px;top:0;width:213px;height:165px;background:#5b9a00;overflow:hidden"><div class="t" style="left:15.400px;top:-10.200px;font-size:158px;line-height:170px;color:#fff;transform:scaleX(.915);transform-origin:0 0">A</div><div class="t" style="left:112.500px;top:7.200px;font-size:150px;line-height:170px;color:#fff">+</div><div class="t" style="right:18.500px;top:140px;font-size:16px;line-height:17px;color:#fff;letter-spacing:.12px;text-shadow:0 1px 2px rgba(0,0,0,.5)"><b>3,7</b> kWh/(m²a)</div></div></div>
<div class="pbox" style="top:327px;height:61px"><div class="pcol"><span>Q P</span></div><div class="bar" style="top:0;width:128px;height:19.500px;background:#d3d3d3"><span>91,5 kWh/(m²a)</span></div><div class="bar" style="top:20.500px;width:70px;height:19.500px;background:linear-gradient(90deg,#3f7fb5,#4a88bd);overflow:visible"><span>50,3 kWh/(m²a)</span></div><div class="bar" style="top:41.500px;width:10px;height:19.500px;background:linear-gradient(90deg,#5b9a00,#9acd32);overflow:visible"><span>6,7 kWh/(m²a)</span></div></div>
<div class="pbox" style="top:395px;height:62px"><div class="pcol"><span>H T</span></div><div class="bar" style="top:0;width:109px;height:19.500px;background:#d3d3d3"><span>0,41 W/(m²K)</span></div><div class="bar" style="top:21px;width:109px;height:19.500px;background:#3f83b8"><span>0,41 W/(m²K)</span></div><div class="bar" style="top:42px;width:59px;height:20px;background:linear-gradient(90deg,#5b9a00,#b5df3a);overflow:visible"><span>0,22 W/(m²K)</span></div></div>
<div class="pbox" style="top:464.500px;height:21px"><div class="pcol"><span>EH</span></div><div class="bar" style="top:0;width:48px;height:21px;background:#86b91f;color:#fff;font-weight:700;text-align:right;padding:0 0 0 0;overflow:hidden">40</div></div>
<div class="ph" style="top:516.8px;font-size:22px;line-height:25px;letter-spacing:-0.136px">Erneuerbare</div>
<div class="ph" style="top:542.5px;font-size:22px;line-height:25px;letter-spacing:-0.196px">Energien</div>
<div class="dot" style="top:521px"></div>
<div class="pbox" style="top:573px;height:41.500px"><div class="pcol"><span>EE</span></div><div class="bar" style="top:0;width:138.500px;height:20px;background:#d3d3d3"><span>65 %</span></div><div class="bar" style="top:21px;width:213px;height:20.5px;background:linear-gradient(90deg,#c62222 0%,#e8772e 22%,#fdd835 50%,#a9d63f 75%,#5b9a00 100%)"><span>100 %</span></div></div>
<div class="ph" style="top:645.9px;font-size:22px;line-height:25px;letter-spacing:-0.1px">Sommerlicher</div>
<div class="ph" style="top:671.4px;font-size:22px;line-height:25px;letter-spacing:-0.225px">Wärmeschutz</div>
<div class="ph" style="top:698.0px;font-size:16.500px;line-height:19px;letter-spacing:-0.138px">DIN 4108-2</div>
<div class="dot" style="top:650px"></div>
<div class="ph" style="top:737.0px;font-size:22px;line-height:25px;letter-spacing:-0.13px">Lüftungskonzept</div>
<div class="ph" style="top:763.1999999999999px;font-size:16.500px;line-height:19px;letter-spacing:-0.088px">DIN 1946-6</div>
<div class="dot" style="top:741px"></div>
<div class="pbox" style="top:787px;height:41px"><div class="pcol"><span>inf min</span></div><div class="bar" style="top:0;width:106.500px;height:19.500px;background:#d3d3d3"><span>31 m³/h</span></div><div class="bar" style="top:20.500px;width:96.500px;height:20.500px;background:linear-gradient(90deg,#3f80b6,#7fb1da)"><span>29 m³/h</span></div></div>
<div class="ph" style="top:858.6px;font-size:22px;line-height:25px;letter-spacing:-0.224px">Beratung</div>
<div class="ph" style="top:884.5px;font-size:16.500px;line-height:19px;letter-spacing:-0.079px">DIN V 18599</div>
</body></html>
